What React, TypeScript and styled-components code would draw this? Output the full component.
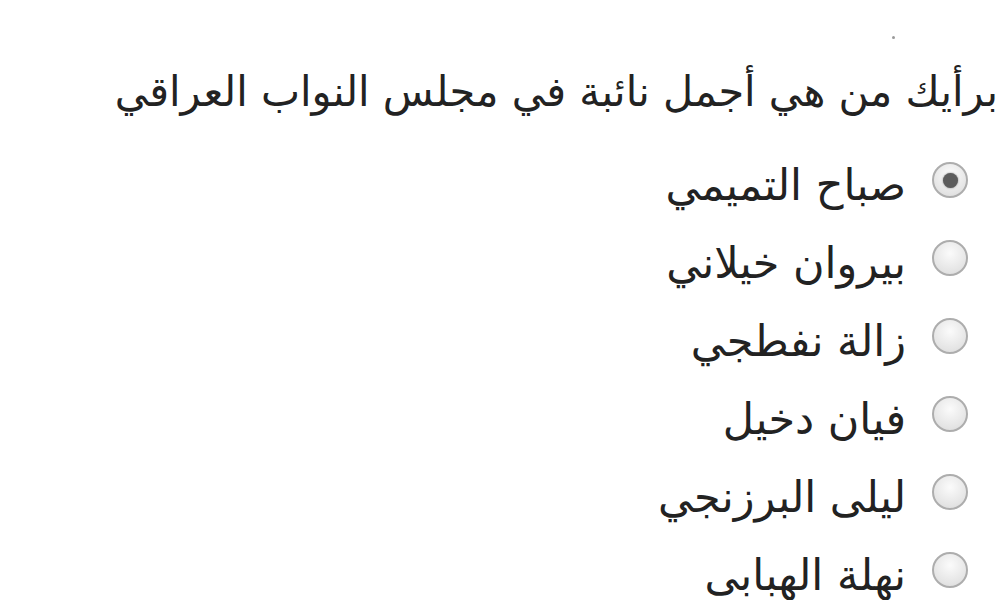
import styled, { createGlobalStyle } from 'styled-components'

const GlobalStyle = createGlobalStyle`
  html, body {
    margin: 0;
    padding: 0;
    background: #fff;
  }
  body {
    font-family: "DejaVu Sans", "Noto Sans", sans-serif;
    color: #222;
  }
`

const Poll = styled.form`
  direction: rtl;
  width: 1000px;
  height: 600px;
  box-sizing: border-box;
  padding: 62px 32px 0 0;
  overflow: hidden;
  position: relative;
`

const Speck = styled.span`
  position: absolute;
  top: 36px;
  left: 892px;
  width: 3px;
  height: 3px;
  border-radius: 50%;
  background: #9a9a9a;
`

const Question = styled.p`
  margin: 0 -30px 0 0;
  font-size: 41.5px;
  line-height: 60px;
  white-space: nowrap;
`

const Options = styled.div`
  display: flex;
  flex-direction: column;
  margin-top: 24px;
`

const Option = styled.label`
  display: flex;
  align-items: center;
  gap: 26px;
  height: 78px;
  font-size: 43px;
`

const Dot = styled.span<{ $checked?: boolean }>`
  flex: none;
  width: 36px;
  height: 36px;
  box-sizing: border-box;
  border-radius: 50%;
  border: 2px solid #adadad;
  background: radial-gradient(circle at 50% 35%, #fbfbfb 0%, #e4e4e4 70%, #d6d6d6 100%);
  display: flex;
  align-items: center;
  justify-content: center;
  margin-top: -10px;

  &::after {
    content: '';
    display: ${({ $checked }) => ($checked ? 'block' : 'none')};
    width: 15px;
    height: 15px;
    border-radius: 50%;
    background: #5c5c5c;
    box-shadow: 0 0 2px #777;
  }
`

const names = [
  'صباح التميمي',
  'بيروان خيلاني',
  'زالة نفطجي',
  'فيان دخيل',
  'ليلى البرزنجي',
  'نهلة الهبابى',
]

export default function App() {
  return (
    <>
      <GlobalStyle />
      <Poll>
        <Speck />
        <Question>برأيك من هي أجمل نائبة في مجلس النواب العراقي</Question>
        <Options>
          {names.map((n, i) => (
            <Option key={n}>
              <Dot $checked={i === 0} />
              <span>{n}</span>
            </Option>
          ))}
        </Options>
      </Poll>
    </>
  )
}
